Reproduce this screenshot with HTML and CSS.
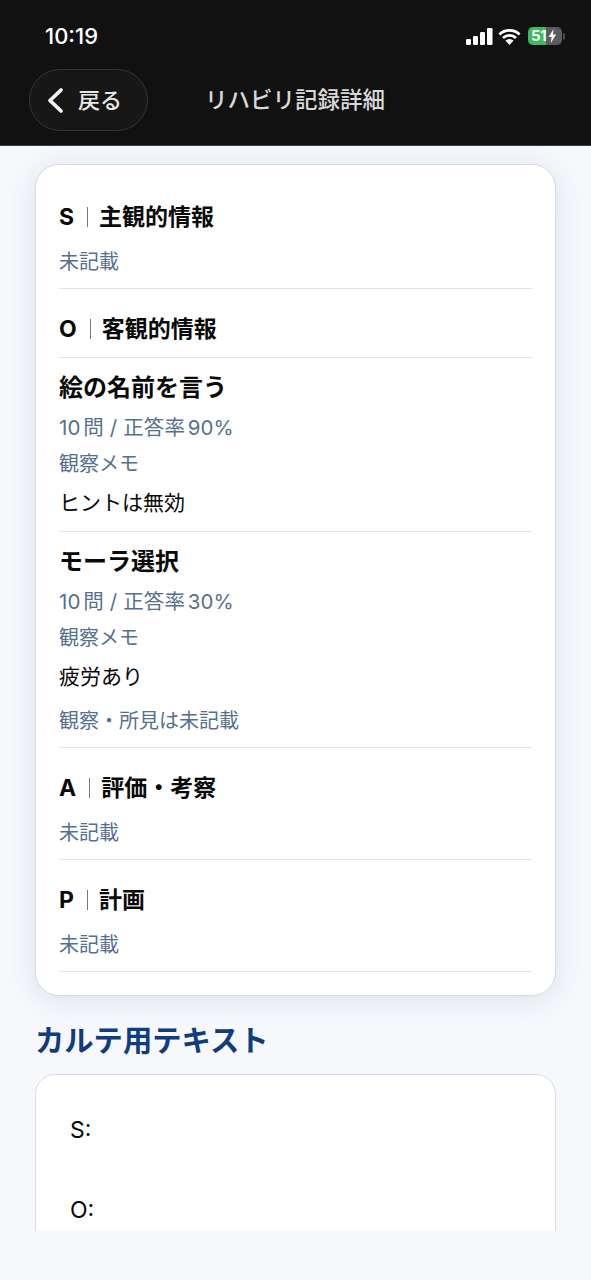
FILE: index.html
```html
<!DOCTYPE html>
<html lang="ja">
<head>
<meta charset="utf-8">
<title>リハビリ記録詳細</title>
<link rel="stylesheet" href="styles.css">
</head>
<body>
<header class="top">
  <div class="status">
    <span class="time">10:19</span>
    <div class="status-icons">
      <svg class="signal" width="27" height="17" viewBox="0 0 27 17"><rect x="0" y="11" width="5" height="6" rx="1.2"/><rect x="7" y="8" width="5" height="9" rx="1.2"/><rect x="14" y="4" width="5" height="13" rx="1.2"/><rect x="21" y="0" width="5.5" height="17" rx="1.2"/></svg>
      <svg class="wifi" width="23" height="17" viewBox="0 0 23 17"><path d="M1.4 6.4a14.6 14.6 0 0 1 20.2 0M5 10a9.5 9.5 0 0 1 13 0" fill="none" stroke="#fff" stroke-width="2.8"/><path d="M11.5 17L7.4 12.6a6 6 0 0 1 8.2 0z" fill="#fff"/></svg>
      <div class="battery"><span class="batt-level">51</span><svg class="bolt" width="9" height="14" viewBox="0 0 9 14"><path d="M5.6 0L.6 8h3l-.8 6 5.4-8.4H5z" fill="#fff"/></svg></div>
      <span class="batt-cap"></span>
    </div>
  </div>
  <div class="nav">
    <button class="back">
      <svg width="20" height="30" viewBox="0 0 20 30"><path d="M16 5L5 15.5 16 26" fill="none" stroke="#f2f2f2" stroke-width="3.8" stroke-linecap="round" stroke-linejoin="round"/></svg>
      <span>戻る</span>
    </button>
    <h1 class="title">リハビリ記録詳細</h1>
  </div>
</header>
<main class="scroll">
  <section class="card">
    <div class="row row-s">
      <h2 class="soap"><b>S</b><i class="bar"></i>主観的情報</h2>
      <p class="muted">未記載</p>
    </div>
    <div class="row row-o">
      <h2 class="soap"><b>O</b><i class="bar"></i>客観的情報</h2>
    </div>
    <div class="row task">
      <h3>絵の名前を言う</h3>
      <p class="score">10問 / 正答率90%</p>
      <p class="muted memo">観察メモ</p>
      <p class="note">ヒントは無効</p>
    </div>
    <div class="row task">
      <h3>モーラ選択</h3>
      <p class="score">10問 / 正答率30%</p>
      <p class="muted memo">観察メモ</p>
      <p class="note">疲労あり</p>
      <p class="muted extra">観察・所見は未記載</p>
    </div>
    <div class="row">
      <h2 class="soap"><b>A</b><i class="bar"></i>評価・考察</h2>
      <p class="muted">未記載</p>
    </div>
    <div class="row">
      <h2 class="soap"><b>P</b><i class="bar"></i>計画</h2>
      <p class="muted">未記載</p>
    </div>
  </section>
  <h2 class="section">カルテ用テキスト</h2>
  <section class="card text-card">
    <p>S:</p>
    <p>O:</p>
  </section>
</main>
</body>
</html>
```
FILE: styles.css
```css
* { box-sizing: border-box; margin: 0; padding: 0; }
html, body { width: 591px; height: 1280px; overflow: hidden; }
body {
  background: #f6f8fc;
  font-family: Inter, "Noto Sans CJK JP", sans-serif;
  color: #0a0a0a;
}
.top { height: 146px; background: #111111; color: #fff; border-bottom: 1px solid #3a3c40; }
.status { height: 69px; display: flex; justify-content: space-between; align-items: flex-start; padding: 22px 26px 0 45px; }
.time { font-size: 22px; line-height: 28px; font-weight: 500; color: #fff; }
.status-icons { display: flex; align-items: center; gap: 5px; padding-top: 5px; }
.signal { fill: #fff; }
.battery { width: 34px; height: 18px; border-radius: 5px; margin-left: 2px; display: flex; align-items: center; background: linear-gradient(90deg, #3cba5c 0 53%, #5c5c5e 53%); overflow: hidden; padding-left: 3px; }
.batt-level { font-size: 15px; font-weight: 700; color: #fff; line-height: 18px; letter-spacing: -0.3px; }
.bolt { margin-left: 2px; }
.batt-cap { width: 2px; height: 7px; margin-left: -4px; border-radius: 0 2px 2px 0; background: #4a4a4c; }
.nav { display: flex; align-items: center; padding-left: 29px; }
.back { width: 119px; height: 62px; border-radius: 31px; background: #171717; border: 1px solid #333435; display: flex; align-items: center; gap: 13px; padding-left: 15px; color: #e8e8e8; font: 500 22px/30px Inter, "Noto Sans CJK JP", sans-serif; }
.title { margin-left: 57px; font-size: 22.5px; line-height: 30px; font-weight: 500; color: #d8d8d8; }
.scroll { height: 1085px; overflow: hidden; padding: 18px 35px 0; }
.card { background: #fff; border: 1px solid #d5dbe8; border-radius: 24px; padding: 34px 23px 23px; box-shadow: 0 4px 28px rgba(40, 70, 130, 0.13); }
.row { border-bottom: 1px solid #e2e6ec; padding-bottom: 12px; }
.row + .row { padding-top: 22px; }
.soap { display: flex; align-items: center; font-size: 23px; line-height: 36px; font-weight: 600; color: #0a0a0a; }
.soap b { font-weight: 700; }
.bar { width: 1px; height: 20px; background: #777; margin: 0 11px 0 13px; }
.muted { font-size: 20px; line-height: 28px; color: #56708f; }
.row .muted { margin-top: 13px; }
.row-o { padding-bottom: 10px; }
.row + .task { padding-top: 12px; padding-bottom: 12px; }
.task h3 { font-size: 24px; line-height: 36px; font-weight: 600; }
.task .score { font-size: 20.5px; line-height: 28px; color: #56708f; margin-top: 8px; letter-spacing: 0.15px; text-autospace: normal; }
.task .memo { margin-top: 8px; }
.note { font-size: 21px; line-height: 28px; margin-top: 11px; margin-bottom: 2px; color: #0a0a0a; }
.task .extra { margin-top: 16px; }
.section { font-size: 29.3px; line-height: 40px; font-weight: 700; color: #0f3d80; margin-top: 25px; }
.text-card { margin-top: 13px; border-radius: 20px; padding: 41px 34px 0; height: 320px; box-shadow: none; }
.text-card p { font-size: 23px; line-height: 28px; margin-bottom: 52px; color: #0a0a0a; }
```
